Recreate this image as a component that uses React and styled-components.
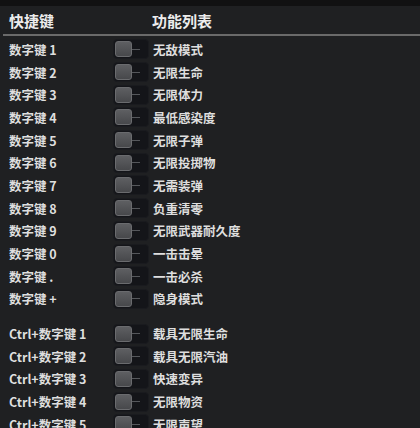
import React from "react";
import styled, { createGlobalStyle } from "styled-components";

const GlobalStyle = createGlobalStyle`
  html, body {
    margin: 0;
    padding: 0;
    background: #1f2022;
  }
  body {
    font-family: "Noto Sans CJK SC", "Noto Sans", sans-serif;
  }
`;

const GROUPS = [
  [
    ["数字键 1", "无敌模式"],
    ["数字键 2", "无限生命"],
    ["数字键 3", "无限体力"],
    ["数字键 4", "最低感染度"],
    ["数字键 5", "无限子弹"],
    ["数字键 6", "无限投掷物"],
    ["数字键 7", "无需装弹"],
    ["数字键 8", "负重清零"],
    ["数字键 9", "无限武器耐久度"],
    ["数字键 0", "一击击晕"],
    ["数字键 .", "一击必杀"],
    ["数字键 +", "隐身模式"],
  ],
  [
    ["Ctrl+数字键 1", "载具无限生命"],
    ["Ctrl+数字键 2", "载具无限汽油"],
    ["Ctrl+数字键 3", "快速变异"],
    ["Ctrl+数字键 4", "无限物资"],
    ["Ctrl+数字键 5", "无限声望"],
  ],
];

const Toggle = () => (
  <StyledToggle>
    <StyledKnob />
    <StyledDash />
  </StyledToggle>
);

export default function App() {
  return (
    <StyledPage>
      <GlobalStyle />
      <StyledTopBar />
      <StyledHeader>
        <StyledKeyHead>快捷键</StyledKeyHead>
        <StyledHeadText>功能列表</StyledHeadText>
      </StyledHeader>
      <StyledList>
        {GROUPS.map((group, gi) => (
          <StyledGroup key={gi}>
            {group.map(([key, name]) => (
              <StyledRow key={key}>
                <StyledKey>{key}</StyledKey>
                <Toggle />
                <StyledName>{name}</StyledName>
              </StyledRow>
            ))}
          </StyledGroup>
        ))}
      </StyledList>
    </StyledPage>
  );
}

const StyledPage = styled.div`
  width: 420px;
  height: 428px;
  overflow: hidden;
  background: #1f2022;
  color: #dedede;
`;

const StyledTopBar = styled.div`
  height: 6px;
  background: #111112;
`;

const StyledHeader = styled.div`
  display: flex;
  align-items: center;
  height: 28px;
  margin-left: 3px;
  border-bottom: 2px solid #6a6a6a;
  font-size: 15px;
  font-weight: 700;
  color: #ececec;
`;

const StyledKeyHead = styled.div`
  width: 149px;
  padding-left: 6px;
  box-sizing: border-box;
`;

const StyledHeadText = styled.div``;

const StyledList = styled.div`
  display: flex;
  flex-direction: column;
  gap: 12px;
  padding-top: 2px;
`;

const StyledGroup = styled.div`
  display: flex;
  flex-direction: column;
`;

const StyledRow = styled.div`
  display: flex;
  align-items: center;
  height: 22.7px;
  font-size: 12.5px;
  font-weight: 700;
`;

const StyledKey = styled.div`
  width: 113px;
  padding-left: 9px;
  box-sizing: border-box;
  flex-shrink: 0;
`;

const StyledToggle = styled.div`
  display: flex;
  align-items: center;
  width: 36px;
  height: 20px;
  box-sizing: border-box;
  background: #141519;
  border-radius: 4px;
  border: 1px solid #1a1b1f;
  flex-shrink: 0;
`;

const StyledKnob = styled.div`
  width: 17px;
  height: 16px;
  margin-left: 1px;
  box-sizing: border-box;
  border-radius: 3px;
  border: 1px solid #6a6b6e;
  background: linear-gradient(#5e5f62, #47484b);
`;

const StyledDash = styled.div`
  width: 8px;
  height: 1px;
  background: #55575b;
`;

const StyledName = styled.div`
  padding-left: 4px;
  white-space: nowrap;
`;
